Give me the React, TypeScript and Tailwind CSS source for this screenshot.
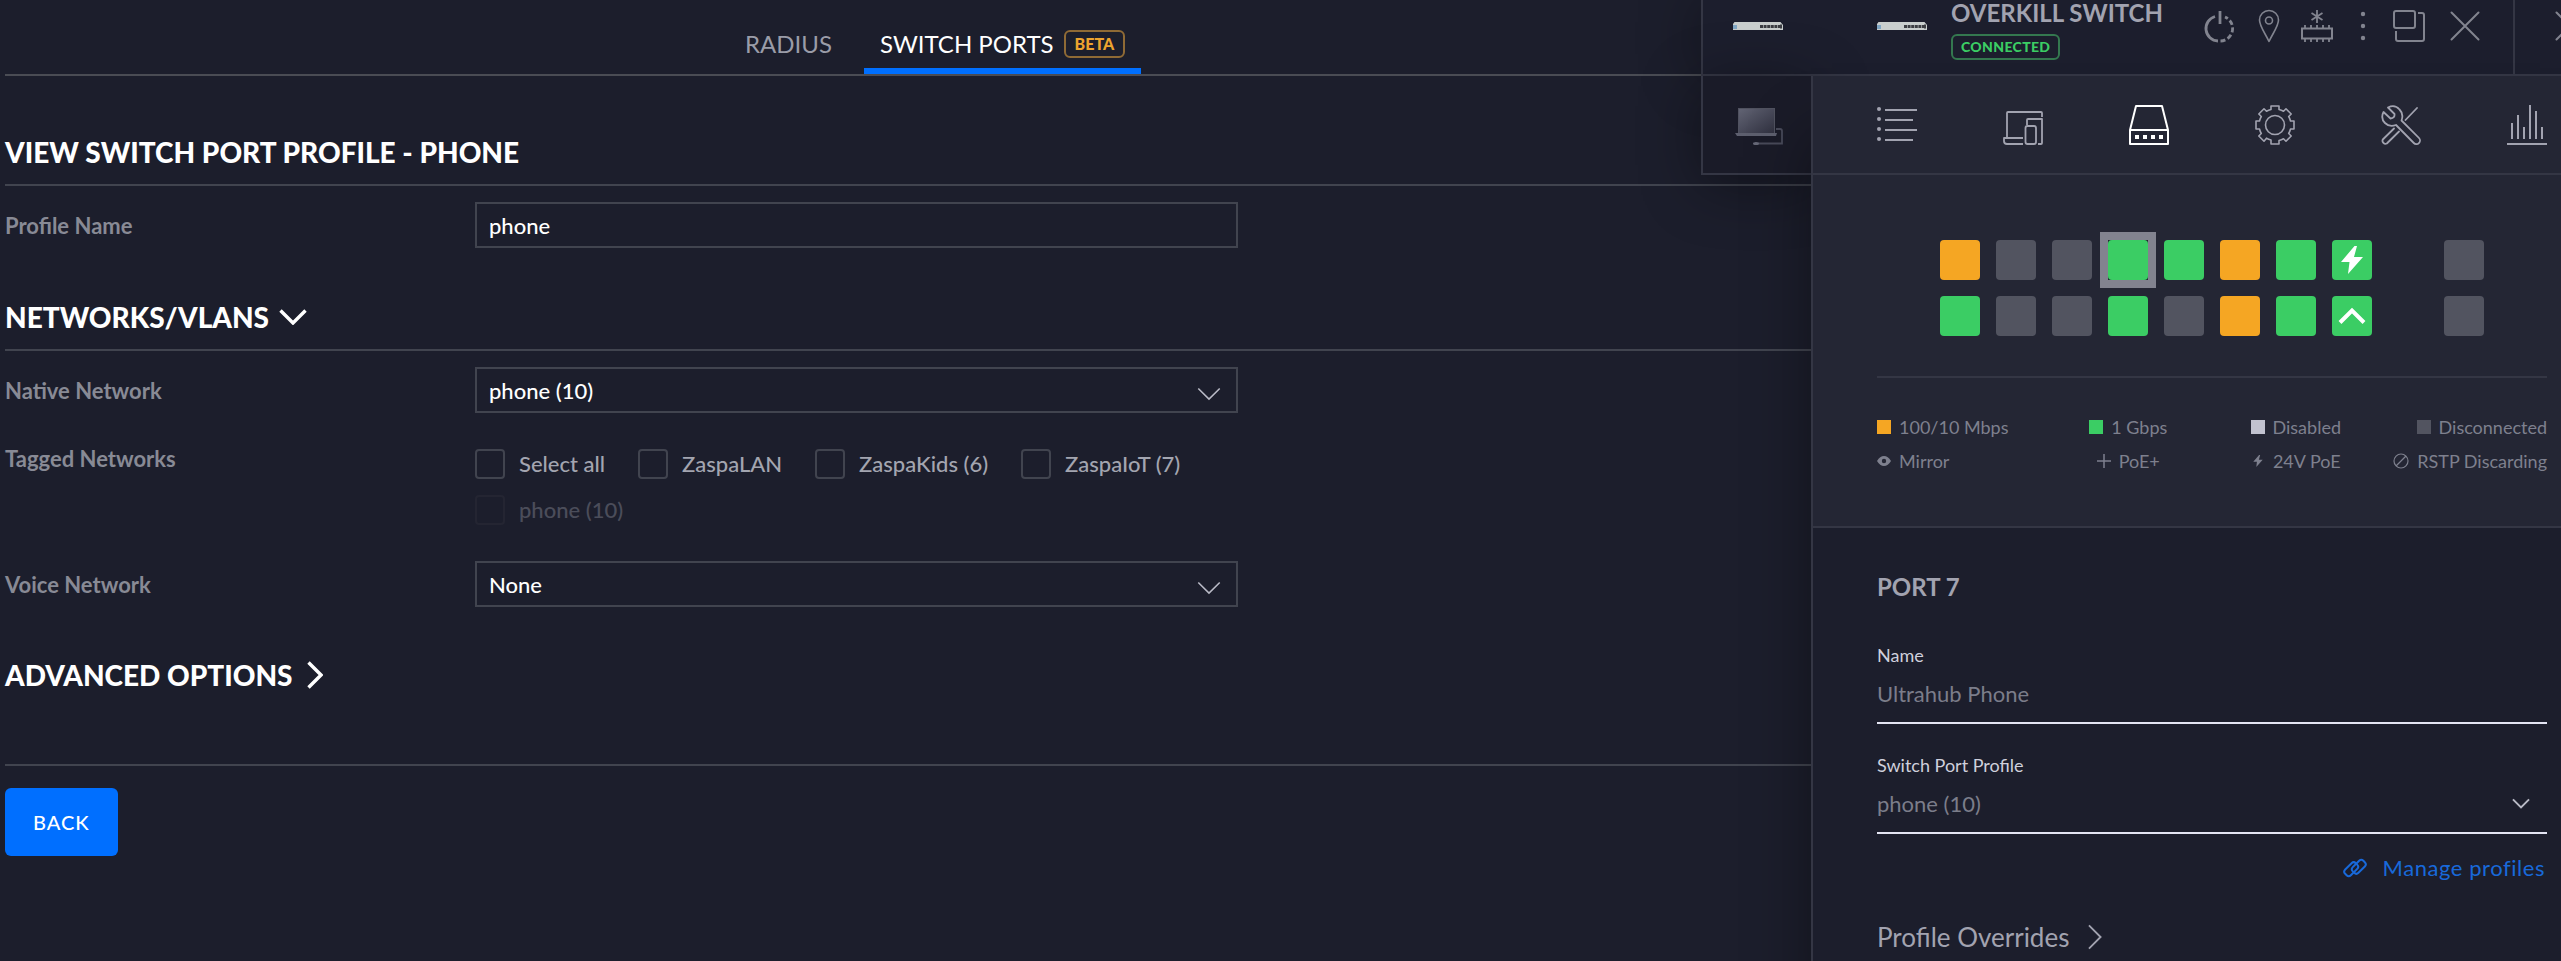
import React, { useState } from 'react'
import clsx from 'clsx'

type IconProps = { className?: string }

const stroke = {
    fill: 'none',
    stroke: 'currentColor',
    strokeLinecap: 'round',
    strokeLinejoin: 'round',
} as const

const ports = [
    ['fe', 'off', 'off', 'gbe', 'gbe', 'fe', 'gbe', 'gbe'],
    ['gbe', 'off', 'off', 'gbe', 'off', 'fe', 'gbe', 'gbe'],
]

const portColors: Record<string, string> = {
    fe: 'bg-[#f5a623]',
    gbe: 'bg-[#3bcd64]',
    off: 'bg-[#525460]',
}

const networks = ['Select all', 'ZaspaLAN', 'ZaspaKids (6)', 'ZaspaIoT (7)']

function Chevron({ className, w = 2 }: IconProps & { w?: number }) {
    return (
        <svg viewBox="0 0 28 16" className={className} fill="none" stroke="currentColor" strokeWidth={w}>
            <path d="M1.5 1.5 14 14 26.5 1.5" />
        </svg>
    )
}

function ChevronRight({ className, w = 2 }: IconProps & { w?: number }) {
    return (
        <svg viewBox="0 0 16 28" className={className} fill="none" stroke="currentColor" strokeWidth={w}>
            <path d="M1.5 1.5 14 14 1.5 26.5" />
        </svg>
    )
}

function SwitchThumb() {
    return (
        <svg viewBox="0 0 50 8" className="h-2 w-[50px]">
            <path d="M1.5 0h46L50 3v5H0V2z" fill="#c9cecd" />
            <path d="M0 3h4v4H0z" fill="#7fa6c4" />
            <path d="M27 4.5h20" stroke="#3b3d42" strokeWidth="3" strokeDasharray="3 .6" />
            <path d="M47 2.5h2v4h-2z" fill="#3b3d42" />
        </svg>
    )
}

function LaptopThumb() {
    return (
        <svg viewBox="0 0 48 40" className="h-10 w-12">
            <defs>
                <linearGradient id="screen" x1="0" y1="0" x2="1" y2="1">
                    <stop offset="0" stopColor="#626474" />
                    <stop offset="1" stopColor="#2f303f" />
                </linearGradient>
            </defs>
            <rect x="3.5" y="1.5" width="36" height="25" fill="url(#screen)" stroke="#50525f" />
            <path d="M0 26h42l-1 3H2z" fill="#5d5f6e" />
            <path d="M41 22h4q2 0 2 2v12.5H20" fill="none" stroke="#484a59" strokeWidth="1.8" />
            <ellipse cx="21" cy="36.5" rx="3" ry="1.500" fill="#666877" />
        </svg>
    )
}

/* Header actions */
function PowerIcon() {
    return (
        <svg viewBox="0 0 32 36" className="h-9 w-8" fill="none" stroke="currentColor" strokeWidth="2.8">
            <path d="M16 3v13" />
            <path d="M11 8.500A12.500 12.500 0 0 0 14 33" />
            <path d="M16.500 33A12.500 12.500 0 0 0 21 9" strokeDasharray="5 2.600" />
        </svg>
    )
}

function PinIcon() {
    return (
        <svg viewBox="0 0 22 34" className="h-[34px] w-[22px]" {...stroke} strokeWidth="1.600">
            <path d="M11 32.500C7 24 1.500 17 1.500 11a9.500 9.500 0 0 1 19 0c0 6-5.500 13-9.500 21.500z" />
            <circle cx="11" cy="11.500" r="3.500" />
        </svg>
    )
}

function ProvisionIcon() {
    return (
        <svg viewBox="0 0 34 34" className="size-[34px]" fill="none" stroke="currentColor" strokeWidth="1.800">
            <path d="M17 1v13M11.500 4l11 7M22.500 4l-11 7" />
            <path d="M2 19.500h30v10H2z" strokeWidth="2" />
            <path d="M5 19v-3M11 19v-3M17 19v-3M23 19v-3M29 19v-3M5 33v-3M11 33v-3M17 33v-3M23 33v-3M29 33v-3" />
        </svg>
    )
}

function DotsIcon() {
    return (
        <svg viewBox="0 0 6 30" className="h-[30px] w-1.5" fill="currentColor">
            <circle cx="3" cy="3" r="2.200" />
            <circle cx="3" cy="15" r="2.200" />
            <circle cx="3" cy="27" r="2.200" />
        </svg>
    )
}

function UndockIcon() {
    return (
        <svg viewBox="0 0 34 34" className="size-[34px]" {...stroke} strokeLinecap="butt" strokeWidth="2">
            <rect x="2" y="2" width="21" height="17" rx="2" />
            <path d="M26 4h4q2 0 2 2v24q0 2-2 2H6q-2 0-2-2v-8" />
        </svg>
    )
}

function CloseIcon() {
    return (
        <svg viewBox="0 0 30 30" className="size-[30px] shrink-0" {...stroke} strokeWidth="2">
            <path d="M1.500 1.500l27 27M28.500 1.500l-27 27" />
        </svg>
    )
}

/* Panel tabs */
function ListIcon() {
    return (
        <svg viewBox="0 0 40 40" className="size-10" fill="none" stroke="currentColor" strokeWidth="2">
            <path d="M8 5h32M8 15h28M8 25h32M8 35h28" />
            <g fill="currentColor" stroke="none">
                <circle cx="2" cy="4" r="2" />
                <circle cx="2" cy="14" r="2" />
                <circle cx="2" cy="24" r="2" />
                <circle cx="2" cy="34" r="2" />
            </g>
        </svg>
    )
}

function DevicesIcon() {
    return (
        <svg viewBox="0 0 40 40" className="size-10" fill="none" stroke="currentColor" strokeWidth="1.800" strokeLinejoin="round">
            <path d="M4 33V8q0-1 1-1h33q1 0 1 1v4" />
            <path d="M20 33H1v3q0 3 3 3h16" />
            <path d="M24 20v-5q0-1 1-1h14v24q0 1-1 1h-3" />
            <rect x="22.500" y="21" width="10.500" height="18" rx="2" />
        </svg>
    )
}

function PortsIcon() {
    return (
        <svg viewBox="0 0 40 40" className="size-10" fill="none" stroke="currentColor" strokeWidth="2" strokeLinejoin="round">
            <path d="M1 39V25L7 1h26l6 24v14zM1 25h38" />
            <path d="M6 32h29" strokeWidth="4" strokeDasharray="4 4" />
        </svg>
    )
}

function GearIcon() {
    return (
        <svg viewBox="0 0 40 40" className="size-10" {...stroke} strokeWidth="1.600">
            <circle cx="20" cy="20" r="9.500" />
            <path d="M16 1h8v3.500q2.500.6 4.500 1.800L31 3.800 36.200 9l-2.500 2.500q1.200 2 1.800 4.500H39v8h-3.500q-.6 2.500-1.800 4.500l2.500 2.500-5.200 5.200-2.500-2.500q-2 1.200-4.500 1.800V39h-8v-4q-2.500-.6-4.500-1.800L9 36.200 3.800 31l2.500-2.500q-1.200-2-1.800-4.500H1v-8h3.500q.6-2.500 1.800-4.500L3.800 9 9 3.800l2.500 2.500q2-1.200 4.500-1.800z" />
        </svg>
    )
}

function ToolsIcon() {
    return (
        <svg viewBox="0 0 40 40" className="size-10" {...stroke} strokeWidth="1.800">
            <path d="M36 3 24.500 15M13 23.500 1.800 34.500a3 3 0 0 0 4 4L18 26.500" />
            <path d="M7 2.500 13.500 9q.5 4-4 4.500L2.500 7C.5 11 1 15 4 18c3 3 7 3.500 11 2l17.800 18a3.600 3.600 0 0 0 5.200-5L20.500 15.500c1.500-4 1-8-2-11C15.500 1 11 .5 7 2.500z" />
        </svg>
    )
}

function StatsIcon() {
    return (
        <svg viewBox="0 0 40 40" className="size-10" fill="none" stroke="currentColor" strokeWidth="2">
            <path d="M0 39h40M5 34V18M11 34V10M17 34V22M23 34V0M29 34V6M35 34V22" />
        </svg>
    )
}

function BoltIcon({ className }: IconProps) {
    return (
        <svg viewBox="0 0 24 28" className={className} fill="currentColor">
            <path d="M14.500 0 1 16h8.500L8 28l15-17h-9L17 0z" />
        </svg>
    )
}

function LinkIcon() {
    return (
        <svg viewBox="0 0 24 20" className="h-5 w-6" {...stroke} strokeWidth="2">
            <rect x="0" y="6.500" width="15" height="8" rx="3" transform="rotate(-45 7.500 10.500) translate(0 1)" />
            <rect x="9" y="5.500" width="15" height="8" rx="3" transform="rotate(-45 16.500 9.500) translate(0 -1)" />
        </svg>
    )
}

function SectionTitle({ children, icon }: { children: React.ReactNode; icon?: React.ReactNode }) {
    return (
        <h2 className="flex items-center gap-[10px] text-[28px] leading-8 font-black text-white">
            {children}
            {icon}
        </h2>
    )
}

function SelectField({ id, value }: { id: string; value: string }) {
    return (
        <div className="relative w-[763px]">
            <select
                id={id}
                defaultValue={value}
                className="h-[46px] w-full appearance-none border-2 border-[#41444f] bg-transparent px-3 text-[22px] font-medium text-white outline-none"
            >
                <option>{value}</option>
            </select>
            <Chevron className="pointer-events-none absolute top-5 right-[17px] h-[14px] w-6 text-[#b9bac6]" w={1.8} />
        </div>
    )
}

function Field({ id, label, children, top }: { id: string; label: string; children: React.ReactNode; top?: boolean }) {
    return (
        <div className={clsx('flex', top ? 'items-start' : 'items-center')}>
            <label htmlFor={id} className={clsx('w-[470px] shrink-0 text-[22px] leading-7 font-bold text-[#888a95]', !top && 'pt-0.5')}>
                {label}
            </label>
            {children}
        </div>
    )
}

function NetworkCheckbox({ id, label, disabled }: { id?: string; label: string; disabled?: boolean }) {
    return (
        <label className={clsx('flex items-center gap-[14px] text-[22px] leading-7 font-medium text-[#a3a5b0]', disabled && 'opacity-35')}>
            <input
                id={id}
                type="checkbox"
                disabled={disabled}
                className={clsx('size-[30px] appearance-none rounded-sm border-2', disabled ? 'border-[#33353f]' : 'border-[#41444f]')}
            />
            {label}
        </label>
    )
}

function ProfilePage() {
    return (
        <main className="min-w-0 flex-1 pl-[5px]">
            <nav className="flex h-[76px] items-end border-b-2 border-[#4a4c54] pl-[740px] text-[24px]">
                <a href="#radius" className="mr-8 flex h-[60px] items-center text-[#9a9ca8]">RADIUS</a>
                <a href="#ports" className="flex h-[60px] items-center gap-[10px] border-b-[6px] border-[#006fff] px-4 pt-[6px] text-white">
                    SWITCH PORTS
                    <span className="flex h-7 items-center rounded-md border-2 border-[#8f6a35] px-[9px] text-[16px] font-black text-[#eda42f]">BETA</span>
                </a>
            </nav>

            <div className="border-b-2 border-[#41444f] pt-[60px] pb-4">
                <SectionTitle>VIEW SWITCH PORT PROFILE - PHONE</SectionTitle>
            </div>
            <div className="pt-4">
                <Field id="profile" label="Profile Name">
                    <input
                        id="profile"
                        defaultValue="phone"
                        className="h-[46px] w-[763px] border-2 border-[#41444f] bg-transparent px-3 text-[22px] font-medium text-white outline-none"
                    />
                </Field>
            </div>

            <div className="border-b-2 border-[#41444f] pt-[53px] pb-4">
                <SectionTitle icon={<Chevron className="h-4 w-7" w={3.4} />}>NETWORKS/VLANS</SectionTitle>
            </div>
            <div className="pt-4">
                <Field id="native" label="Native Network">
                    <SelectField id="native" value="phone (10)" />
                </Field>
            </div>
            <div className="pt-8">
                <Field id="tagged" label="Tagged Networks" top>
                    <div className="flex w-[763px] flex-wrap gap-x-[33px] gap-y-4 pt-1">
                        {networks.map((name, i) => <NetworkCheckbox key={name} id={i === 0 ? 'tagged' : undefined} label={name} />)}
                        <NetworkCheckbox label="phone (10)" disabled />
                    </div>
                </Field>
            </div>
            <div className="pt-9">
                <Field id="voice" label="Voice Network">
                    <SelectField id="voice" value="None" />
                </Field>
            </div>

            <div className="border-b-2 border-[#41444f] pt-[52px] pb-[73px]">
                <SectionTitle icon={<ChevronRight className="ml-1 h-7 w-4" w={3.4} />}>ADVANCED OPTIONS</SectionTitle>
            </div>
            <button className="mt-[22px] h-[68px] rounded-md bg-[#006fff] px-7 text-[20px] font-medium tracking-wider text-white">BACK</button>
        </main>
    )
}

function Port({ kind, selected, children }: { kind: string; selected?: boolean; children?: React.ReactNode }) {
    return (
        <div className={clsx(selected && '-m-2 border-8 border-[#82838f]')}>
            <button
                aria-label="Port"
                className={clsx('flex size-10 items-center justify-center rounded-sm text-white', portColors[kind])}
            >
                {children}
            </button>
        </div>
    )
}

function PortGrid() {
    return (
        <div className="flex flex-col items-center gap-4">
            {ports.map((row, r) => (
                <div key={r} className="flex gap-4">
                    {row.map((kind, i) => (
                        <Port key={i} kind={kind} selected={r === 0 && i === 3}>
                            {r === 0 && i === 7 && <BoltIcon className="h-7 w-6" />}
                            {r === 1 && i === 7 && (
                                <svg viewBox="0 0 28 18" className="h-[18px] w-7" fill="none" stroke="currentColor" strokeWidth="4">
                                    <path d="M2 15.500 14 3.500l12 12" />
                                </svg>
                            )}
                        </Port>
                    ))}
                    <div className="ml-14">
                        <Port kind="off" />
                    </div>
                </div>
            ))}
        </div>
    )
}

function Legend() {
    const item = 'flex items-center gap-2'
    return (
        <div className="grid grid-cols-4 gap-y-2 text-[18px] leading-[26px] text-[#7e808e]">
            <span className={item}><i className="size-[14px] bg-[#f5a623]" />100/10 Mbps</span>
            <span className={clsx(item, 'justify-center')}><i className="size-[14px] bg-[#3bcd64]" />1 Gbps</span>
            <span className={clsx(item, 'justify-center')}><i className="size-[14px] bg-[#c1c2cf]" />Disabled</span>
            <span className={clsx(item, 'justify-end')}><i className="size-[14px] bg-[#525460]" />Disconnected</span>
            <span className={item}>
                <svg viewBox="0 0 14 14" className="size-[14px]" fill="currentColor" fillRule="evenodd">
                    <path d="M0 7q3-5 7-5t7 5q-3 5-7 5T0 7zm7-2.200a2.200 2.200 0 1 0 0 4.400 2.200 2.200 0 0 0 0-4.400z" />
                </svg>
                Mirror
            </span>
            <span className={clsx(item, 'justify-center')}>
                <svg viewBox="0 0 14 14" className="size-[14px]" stroke="currentColor" strokeWidth="1.500"><path d="M7 0v14M0 7h14" /></svg>
                PoE+
            </span>
            <span className={clsx(item, 'justify-center')}>
                <BoltIcon className="h-3 w-[14px]" />
                24V PoE
            </span>
            <span className={clsx(item, 'justify-end whitespace-nowrap')}>
                <svg viewBox="0 0 16 16" className="size-4" fill="none" stroke="currentColor" strokeWidth="1.200">
                    <circle cx="8" cy="8" r="7" />
                    <path d="M13 3 3 13" />
                </svg>
                RSTP Discarding
            </span>
        </div>
    )
}

function PanelHeader() {
    return (
        <header className="flex h-[76px] border-b-2 border-l-2 border-[#343644] bg-[#1c1e2d] text-[#82848f]">
            <div className="flex w-[174px] shrink-0 items-start pt-[22px] pl-[30px]">
                <SwitchThumb />
            </div>
            <div className="flex flex-1 items-start">
                <div className="pt-[22px]"><SwitchThumb /></div>
                <div className="ml-6">
                    <h1 className="text-[24px] leading-[26px] font-bold whitespace-nowrap text-[#a2a3b0]">OVERKILL SWITCH</h1>
                    <span className="mt-2 flex h-[26px] w-fit items-center rounded-md border-2 border-[#34784f] px-2 pb-0.5 text-[14px] font-black tracking-wide text-[#3bcd64]">CONNECTED</span>
                </div>
            </div>
            <div className="flex h-[52px] items-center pr-[33px]">
                <button aria-label="Restart"><PowerIcon /></button>
                <button aria-label="Locate" className="ml-[22px]"><PinIcon /></button>
                <button aria-label="Provision" className="ml-5"><ProvisionIcon /></button>
                <button aria-label="More" className="ml-[26px]"><DotsIcon /></button>
                <button aria-label="Undock" className="ml-[26px]"><UndockIcon /></button>
                <button aria-label="Close" className="ml-6"><CloseIcon /></button>
            </div>
            <div className="flex h-[74px] w-12 items-start overflow-hidden border-l-2 border-[#343644] pt-[11px] pl-10">
                <button aria-label="Close all"><CloseIcon /></button>
            </div>
        </header>
    )
}

function DevicePanel() {
    const [tab, setTab] = useState(2)
    const tabs = [
        { name: 'Details', icon: <ListIcon /> },
        { name: 'Clients', icon: <DevicesIcon /> },
        { name: 'Ports', icon: <PortsIcon /> },
        { name: 'Settings', icon: <GearIcon /> },
        { name: 'Tools', icon: <ToolsIcon /> },
        { name: 'Statistics', icon: <StatsIcon /> },
    ]

    return (
        <aside className="relative -ml-[110px] flex w-[860px] shrink-0 flex-col">
            {/* Stacked panel and its shadow over the page */}
            <div className="shadow-[0_0_60px_rgba(0,0,0,0.35)]">
                <PanelHeader />
            </div>
            <div className="flex flex-1">
                <div className="h-[99px] w-[110px] shrink-0 border-b-2 border-l-2 border-[#343644] bg-[#1a1b28] pt-[31px] pl-8 shadow-[0_10px_60px_rgba(0,0,0,0.4)]">
                    <LaptopThumb />
                </div>
                <section className="relative min-w-0 flex-1 border-l-2 border-[#343644] bg-[#1c1e2c] shadow-[0_60px_60px_rgba(0,0,0,0.4)]">
                    <div role="tablist" className="flex h-[99px] items-center justify-between border-b-2 border-[#343644] bg-[#242634] pr-[14px] pl-16">
                        {tabs.map((t, i) => (
                            <button
                                key={t.name}
                                role="tab"
                                aria-label={t.name}
                                aria-selected={tab === i}
                                onClick={() => setTab(i)}
                                className={tab === i ? 'text-white' : 'text-[#a2a3b0]'}
                            >
                                {t.icon}
                            </button>
                        ))}
                    </div>
                    <div className="border-b-2 border-[#343644] bg-[#242634] pt-[65px] pr-[14px] pb-[52px] pl-16">
                        <PortGrid />
                        <div className="mt-10 mb-9 h-0.5 bg-[#343644]" />
                        <Legend />
                    </div>
                    <div className="pt-11 pr-[14px] pl-16">
                        <h2 className="text-[24px] leading-[30px] font-bold text-[#a2a3b0]">PORT 7</h2>
                        <label htmlFor="port-name" className="mt-[41px] block text-[18px] leading-6 text-[#cfd0dc]">Name</label>
                        <input
                            id="port-name"
                            defaultValue="Ultrahub Phone"
                            className="mt-[3px] h-[54px] w-full border-b-2 border-[#e3e4f2] bg-transparent pb-1.5 text-[22px] text-[#7b7d8a] outline-none"
                        />
                        <label htmlFor="port-profile" className="mt-[29px] block text-[18px] leading-6 text-[#cfd0dc]">Switch Port Profile</label>
                        <div className="relative mt-[3px]">
                            <select
                                id="port-profile"
                                className="h-[54px] w-full appearance-none border-b-2 border-[#e3e4f2] bg-transparent pb-1.5 text-[22px] text-[#7b7d8a] outline-none"
                            >
                                <option>phone (10)</option>
                            </select>
                            <Chevron className="pointer-events-none absolute top-[18px] right-[17px] h-[11px] w-[18px] text-[#b9bac6]" w={3} />
                        </div>
                        <div className="mt-5 flex justify-end pr-0.5">
                            <a href="#profiles" className="flex items-center gap-4 text-[22px] leading-7 tracking-wide text-[#1869da]">
                                <LinkIcon />
                                Manage profiles
                            </a>
                        </div>
                        <button className="mt-[39px] flex items-center gap-[18px] text-[26px] leading-8 text-[#a2a3b0]">
                            Profile Overrides
                            <ChevronRight className="h-[26px] w-4" w={2} />
                        </button>
                    </div>
                </section>
            </div>
        </aside>
    )
}

function App() {
    return (
        <div className="flex min-h-screen overflow-hidden bg-[#1c1e2c] font-['Lato',sans-serif]">
            <ProfilePage />
            <DevicePanel />
        </div>
    )
}

export default App
